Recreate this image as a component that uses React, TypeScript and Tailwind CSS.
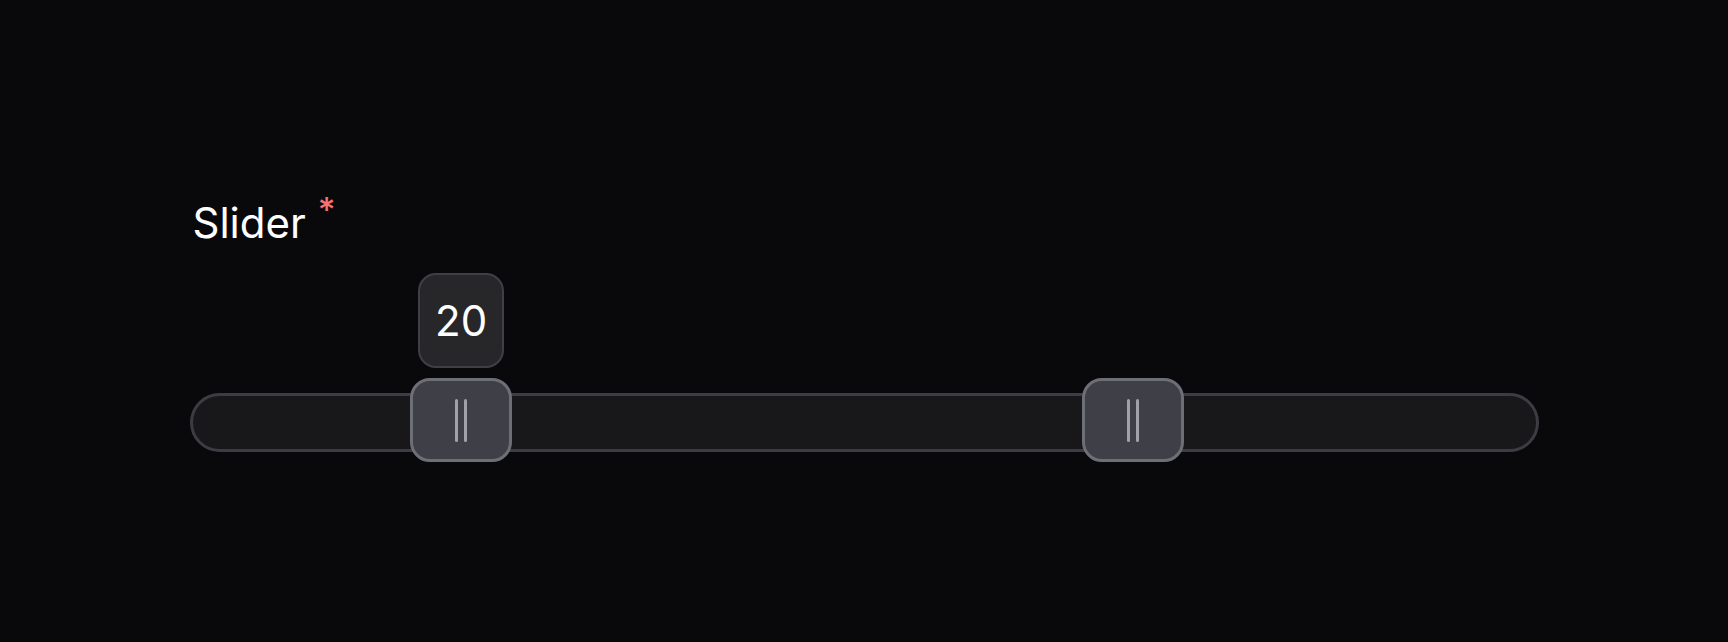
import { useState } from 'react';

// Range slider with two thumbs and a value bubble over the first one
const MIN = 0;
const MAX = 100;

const toPct = (v: number) => ((v - MIN) / (MAX - MIN)) * 100;

const Thumb = ({ value }: { value: number }) => (
  <div
    className="absolute top-[105px] -translate-x-1/2 w-[102px] h-[84px] rounded-[20px] border-[3px] border-[#6e6e76] bg-[#3f3f47] flex items-center justify-center gap-[6px]"
    style={{ left: `${toPct(value)}%` }}
  >
    <span className="w-[3px] h-[43px] rounded-full bg-[#a1a1aa]" />
    <span className="w-[3px] h-[43px] rounded-full bg-[#a1a1aa]" />
  </div>
);

export default function App() {
  const [values] = useState([20, 70]);

  return (
    <div
      className="min-h-screen bg-[#09090b] pt-[199px]"
      style={{ fontFamily: 'Inter, "Noto Sans", sans-serif' }}
    >
      <div className="mx-auto w-[1349px]">
        {/* Label */}
        <div className="flex items-start text-[42px] leading-[48px] text-white">
          <span className="ml-[3px]">Slider</span>
          <span className="ml-[12px] -mt-[6px] text-[34px] leading-[34px] font-medium text-[#f87171]">*</span>
        </div>

        {/* Slider */}
        <div className="relative mt-[26px] pt-[120px] h-[190px]">
          <div className="h-[59px] rounded-full border-[3px] border-[#3c3c42] bg-[#18181b]" />

          {/* thumbs sit on the inner width of the track */}
          <div className="absolute inset-y-0 left-[3px] right-[3px]">
            <div
              className="absolute top-0 -translate-x-1/2 w-[86px] h-[95px] rounded-[18px] border-2 border-[#3f3f46] bg-[#27272a] flex items-center justify-center text-[42px] text-white"
              style={{ left: `${toPct(values[0])}%` }}
            >
              {values[0]}
            </div>

            {values.map((v, i) => (
              <Thumb key={i} value={v} />
            ))}
          </div>
        </div>
      </div>
    </div>
  );
}
